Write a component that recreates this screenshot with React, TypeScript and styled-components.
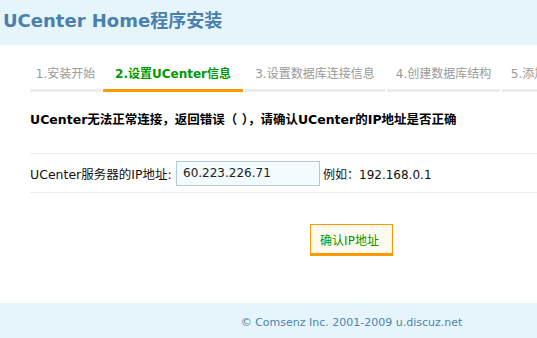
import React from "react";
import styled, { createGlobalStyle } from "styled-components";

const steps = [
  { label: "1.安装开始", width: 71 },
  { label: "2.设置UCenter信息", width: 140, active: true },
  { label: "3.设置数据库连接信息", width: 140 },
  { label: "4.创建数据库结构", width: 113 },
  { label: "5.添加默认数据", width: 101 },
  { label: "6.安装完成", width: 80 },
];

export default function App() {
  return (
    <>
      <GlobalStyle />
      <Page>
        <Header>
          <Title>UCenter Home程序安装</Title>
        </Header>

        <Main>
          <Steps>
            {steps.map((s) => (
              <Step key={s.label} $width={s.width} $active={!!s.active}>
                {s.label}
              </Step>
            ))}
          </Steps>

          <Message>UCenter无法正常连接，返回错误（ ），请确认UCenter的IP地址是否正确</Message>

          <FormTable>
            <FormRow>
              <Label>UCenter服务器的IP地址:</Label>
              <IpInput defaultValue="60.223.226.71" />
              <Hint>例如：192.168.0.1</Hint>
            </FormRow>
          </FormTable>
        </Main>

        <ButtonRow>
          <SubmitButton type="button">确认IP地址</SubmitButton>
        </ButtonRow>

        <Footer>© Comsenz Inc. 2001-2009 u.discuz.net</Footer>
      </Page>
    </>
  );
}

const GlobalStyle = createGlobalStyle`
  html, body {
    margin: 0;
    padding: 0;
    background: #fff;
    overflow: hidden;
  }
  body {
    font-family: "DejaVu Sans", Verdana, "Noto Sans CJK SC", sans-serif;
    font-size: 12px;
    color: #000;
  }
`;

const Page = styled.div`
  width: 703px;
`;

const Header = styled.header`
  height: 45px;
  background: #e5f5fb;
  padding-left: 3px;
`;

const Title = styled.h1`
  margin: 0;
  font-size: 18px;
  line-height: 42px;
  font-weight: bold;
  color: #4a7fae;
`;

const Main = styled.main`
  padding-left: 30px;
`;

const Steps = styled.ul`
  display: flex;
  gap: 2px;
  list-style: none;
  margin: 14px 0 0;
  padding: 0;
  white-space: nowrap;
`;

const Step = styled.li<{ $width: number; $active: boolean }>`
  flex: 0 0 ${(p) => p.$width}px;
  height: 30px;
  line-height: 30px;
  text-align: center;
  font-size: 12px;
  font-weight: ${(p) => (p.$active ? "bold" : "normal")};
  color: ${(p) => (p.$active ? "#009900" : "#999")};
  border-bottom: 3px solid ${(p) => (p.$active ? "#ff9900" : "#ececec")};
`;

const Message = styled.h3`
  margin: 19px 0 0;
  font-size: 12.5px;
  line-height: 18px;
  font-weight: bold;
  color: #000;
`;

const FormTable = styled.div`
  margin-top: 24px;
  border-top: 1px solid #ececec;
`;

const FormRow = styled.div`
  display: flex;
  align-items: center;
  height: 38px;
  border-bottom: 1px solid #ececec;
`;

const Label = styled.span`
  flex: 0 0 146px;
  font-size: 12.5px;
  color: #111;
`;

const IpInput = styled.input`
  box-sizing: border-box;
  width: 144px;
  height: 25px;
  margin: 0 3px 0 0;
  padding: 0 0 0 6px;
  border: 1px solid #b5c9d5;
  background: #f2fbfe;
  font-family: "DejaVu Sans", Verdana, sans-serif;
  font-size: 12px;
  color: #222;
  outline: none;
`;

const Hint = styled.span`
  color: #111;
`;

const ButtonRow = styled.div`
  display: flex;
  justify-content: center;
  padding-top: 31px;
`;

const SubmitButton = styled.button`
  box-sizing: border-box;
  width: 83px;
  height: 32px;
  padding: 0 4px 0 0;
  background: #fffaf0;
  border: 1px solid #ff9900;
  border-bottom-width: 3px;
  font-family: "DejaVu Sans", Verdana, "Noto Sans CJK SC", sans-serif;
  font-size: 12px;
  color: #009900;
  cursor: pointer;
`;

const Footer = styled.footer`
  margin-top: 47px;
  height: 40px;
  padding-top: 12px;
  box-sizing: border-box;
  background: #e5f5fb;
  text-align: center;
  font-size: 11px;
  line-height: 16px;
  color: #4f83ad;
`;
